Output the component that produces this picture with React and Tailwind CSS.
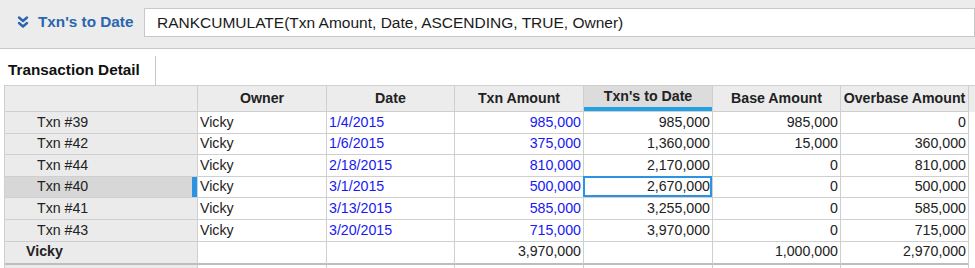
import React from 'react';

const rows = [
  { id: 'Txn #39', owner: 'Vicky', date: '1/4/2015', amt: '985,000', todate: '985,000', base: '985,000', over: '0' },
  { id: 'Txn #42', owner: 'Vicky', date: '1/6/2015', amt: '375,000', todate: '1,360,000', base: '15,000', over: '360,000' },
  { id: 'Txn #44', owner: 'Vicky', date: '2/18/2015', amt: '810,000', todate: '2,170,000', base: '0', over: '810,000' },
  { id: 'Txn #40', owner: 'Vicky', date: '3/1/2015', amt: '500,000', todate: '2,670,000', base: '0', over: '500,000', selected: true },
  { id: 'Txn #41', owner: 'Vicky', date: '3/13/2015', amt: '585,000', todate: '3,255,000', base: '0', over: '585,000' },
  { id: 'Txn #43', owner: 'Vicky', date: '3/20/2015', amt: '715,000', todate: '3,970,000', base: '0', over: '715,000' },
];

const cell = 'h-full border-r border-b border-[#cfcfcf] flex items-center px-[2px] shrink-0';

const App = () => {
  return (
    <div className="w-[975px] h-[268px] bg-white overflow-hidden text-[14.2px] text-[#222]" style={{ fontFamily: '"Liberation Sans", Arial, sans-serif' }}>
      {/* formula bar */}
      <div className="h-[49px] bg-[#ececec] border-b border-[#c9c9c9] flex items-start pt-[8px]">
        <div className="w-[144px] h-[28px] flex items-center pl-[17px] text-[#2a66ad] font-bold text-[15.3px] shrink-0">
          <svg width="12" height="12" viewBox="0 0 12 12" className="mr-[9px]" fill="none" stroke="#2a66ad" strokeWidth="2.4" strokeLinecap="round" strokeLinejoin="round">
            <path d="M2 1.5 L6 5 L10 1.5" />
            <path d="M2 7 L6 10.5 L10 7" />
          </svg>
          Txn's to Date
        </div>
        <div className="flex-1 h-[29px] bg-white border border-[#c8c8c8] flex items-center pl-[12px] text-[15.5px] text-[#1a1a1a]">
          RANKCUMULATE(Txn Amount, Date, ASCENDING, TRUE, Owner)
        </div>
      </div>

      {/* tab */}
      <div className="h-[36px] flex items-end">
        <div className="h-[29px] w-[156px] border-r border-[#c8c8c8] flex items-center pl-[8px] font-bold text-[15.3px] text-[#111]">
          Transaction Detail
        </div>
      </div>

      {/* grid */}
      <div className="ml-[4px] border-l border-t border-[#cfcfcf]">
        <div className="flex h-[26px] bg-[#ececec] font-bold">
          <div className={`${cell} w-[193px]`}></div>
          <div className={`${cell} w-[129px] justify-center`}>Owner</div>
          <div className={`${cell} w-[128px] justify-center`}>Date</div>
          <div className={`${cell} w-[129px] justify-center`}>Txn Amount</div>
          <div className={`${cell} w-[129px] justify-center relative bg-[#dcdcdc] pb-[3px]`}>
            Txn's to Date
            <div className="absolute left-0 right-0 bottom-0 h-[4px] bg-[#23a0e3]"></div>
          </div>
          <div className={`${cell} w-[128px] justify-center`}>Base Amount</div>
          <div className={`${cell} w-[128px] justify-center`}>Overbase Amount</div>
        </div>

        {rows.map((r) => (
          <div key={r.id} className="flex h-[21.6px]">
            <div className={`${cell} w-[193px] pl-[32px] relative ${r.selected ? 'bg-[#d7d7d7]' : 'bg-[#ebebeb]'}`}>
              {r.id}
              {r.selected && <div className="absolute right-0 top-0 bottom-0 w-[5px] bg-[#2a93e3]"></div>}
            </div>
            <div className={`${cell} w-[129px]`}>{r.owner}</div>
            <div className={`${cell} w-[128px] text-[#1818f2]`}>{r.date}</div>
            <div className={`${cell} w-[129px] justify-end text-[#1818f2]`}>{r.amt}</div>
            <div className={`${cell} w-[129px] justify-end relative`}>
              {r.todate}
              {r.selected && <div className="absolute -left-px -top-px right-0 bottom-0 border-2 border-[#2a93e3]"></div>}
            </div>
            <div className={`${cell} w-[128px] justify-end`}>{r.base}</div>
            <div className={`${cell} w-[128px] justify-end`}>{r.over}</div>
          </div>
        ))}

        <div className="flex h-[23px]">
          <div className={`${cell} w-[193px] pl-[21px] bg-[#ebebeb] font-bold border-b-2 border-b-[#bdbdbd]`}>Vicky</div>
          <div className={`${cell} w-[129px] border-b-2 border-b-[#bdbdbd]`}></div>
          <div className={`${cell} w-[128px] border-b-2 border-b-[#bdbdbd]`}></div>
          <div className={`${cell} w-[129px] justify-end border-b-2 border-b-[#bdbdbd]`}>3,970,000</div>
          <div className={`${cell} w-[129px] border-b-2 border-b-[#bdbdbd]`}></div>
          <div className={`${cell} w-[128px] justify-end border-b-2 border-b-[#bdbdbd]`}>1,000,000</div>
          <div className={`${cell} w-[128px] justify-end border-b-2 border-b-[#bdbdbd]`}>2,970,000</div>
        </div>
        <div className="flex h-[10px]">
          <div className="w-[193px] h-full border-r border-[#cfcfcf] bg-[#ebebeb]"></div>
          <div className="w-[129px] h-full border-r border-[#cfcfcf]"></div>
          <div className="w-[128px] h-full border-r border-[#cfcfcf]"></div>
          <div className="w-[129px] h-full border-r border-[#cfcfcf]"></div>
          <div className="w-[129px] h-full border-r border-[#cfcfcf]"></div>
          <div className="w-[128px] h-full border-r border-[#cfcfcf]"></div>
          <div className="w-[128px] h-full border-r border-[#cfcfcf]"></div>
        </div>
      </div>
    </div>
  );
};

export default App;
